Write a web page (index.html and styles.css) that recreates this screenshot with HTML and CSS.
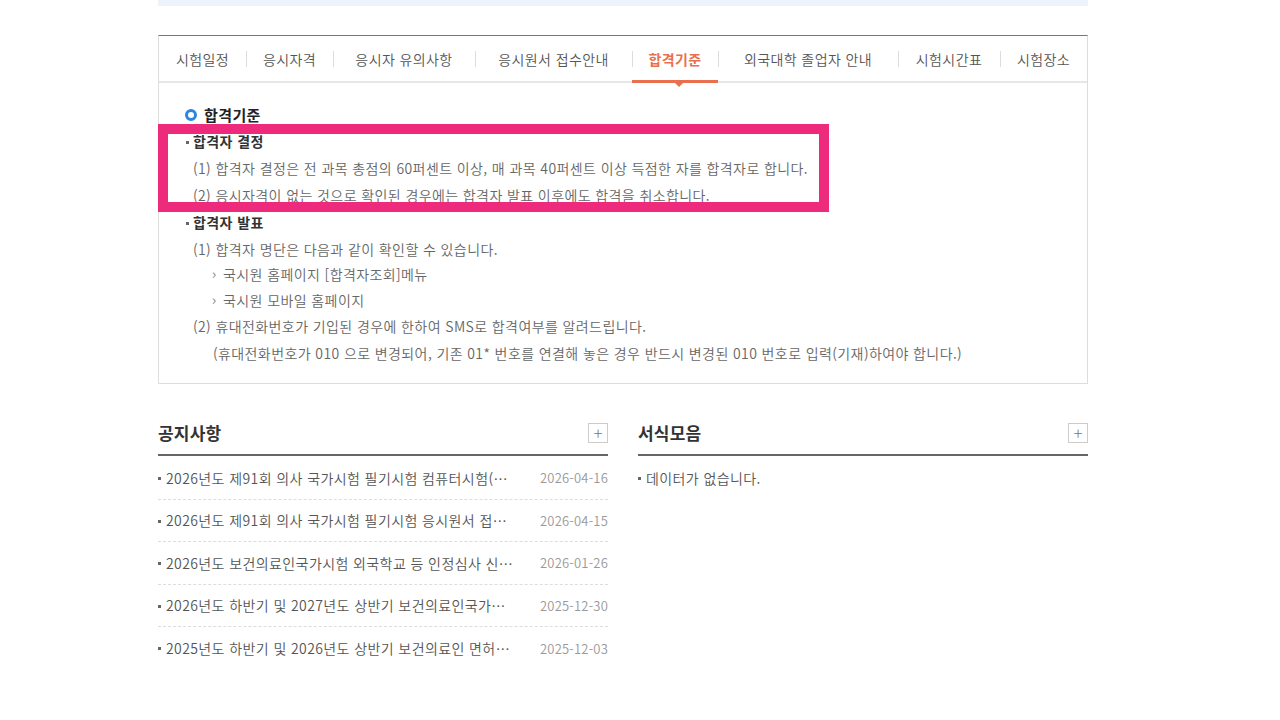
FILE: index.html
```html
<!DOCTYPE html>
<html lang="ko">
<head>
<meta charset="utf-8">
<title>합격기준</title>
<link rel="stylesheet" href="styles.css">
</head>
<body>
<div class="page">
  <div class="top-strip"></div>

  <section class="tab-box">
    <ul class="tabs">
      <li class="tab">시험일정</li>
      <li class="tab">응시자격</li>
      <li class="tab">응시자 유의사항</li>
      <li class="tab">응시원서 접수안내</li>
      <li class="tab active">합격기준</li>
      <li class="tab">외국대학 졸업자 안내</li>
      <li class="tab">시험시간표</li>
      <li class="tab">시험장소</li>
    </ul>
    <div class="tab-content">
      <h3 class="sec-title"><span class="ring"></span>합격기준</h3>
      <p class="sub-title">합격자 결정</p>
      <p class="line">(1) 합격자 결정은 전 과목 총점의 60퍼센트 이상, 매 과목 40퍼센트 이상 득점한 자를 합격자로 합니다.</p>
      <p class="line">(2) 응시자격이 없는 것으로 확인된 경우에는 합격자 발표 이후에도 합격을 취소합니다.</p>
      <p class="sub-title">합격자 발표</p>
      <p class="line">(1) 합격자 명단은 다음과 같이 확인할 수 있습니다.</p>
      <ul class="arrows">
        <li class="arrow">국시원 홈페이지 [합격자조회]메뉴</li>
        <li class="arrow">국시원 모바일 홈페이지</li>
      </ul>
      <p class="line">(2) 휴대전화번호가 기입된 경우에 한하여 SMS로 합격여부를 알려드립니다.</p>
      <p class="note">(휴대전화번호가 010 으로 변경되어, 기존 01* 번호를 연결해 놓은 경우 반드시 변경된 010 번호로 입력(기재)하여야 합니다.)</p>
    </div>
  </section>

  <div class="boards">
    <section class="board">
      <header class="board-head">
        <h2>공지사항</h2>
        <span class="more">+</span>
      </header>
      <ul class="board-list">
        <li><span class="subj">2026년도 제91회 의사 국가시험 필기시험 컴퓨터시험(CBT) 시행 안내</span><span class="date">2026-04-16</span></li>
        <li><span class="subj">2026년도 제91회 의사 국가시험 필기시험 응시원서 접수 안내</span><span class="date">2026-04-15</span></li>
        <li><span class="subj">2026년도 보건의료인국가시험 외국학교 등 인정심사 신청 안내</span><span class="date">2026-01-26</span></li>
        <li><span class="subj">2026년도 하반기 및 2027년도 상반기 보건의료인국가시험 시행계획</span><span class="date">2025-12-30</span></li>
        <li><span class="subj">2025년도 하반기 및 2026년도 상반기 보건의료인 면허시험 안내</span><span class="date">2025-12-03</span></li>
      </ul>
    </section>
    <section class="board">
      <header class="board-head">
        <h2>서식모음</h2>
        <span class="more">+</span>
      </header>
      <ul class="board-list">
        <li class="empty"><span class="subj">데이터가 없습니다.</span></li>
      </ul>
    </section>
  </div>

  <div class="highlight"></div>
</div>
</body>
</html>
```

FILE: styles.css
```css
* { box-sizing: border-box; }
html, body { margin: 0; padding: 0; background: #fff; }
body {
  font-family: "Noto Sans CJK KR", "Noto Sans", sans-serif;
  color: #555;
  font-size: 14px;
  font-weight: 350;
  letter-spacing: 0.4px;
}
ul, p, h2, h3 { margin: 0; padding: 0; list-style: none; }

.page {
  position: relative;
  width: 930px;
  margin-left: 158px;
}

.top-strip {
  height: 6px;
  background: #edf3fa;
}

.tab-box {
  margin-top: 29px;
  border-top: 1px solid #777;
  border-left: 1px solid #ddd;
  border-right: 1px solid #ddd;
  border-bottom: 1px solid #ddd;
}

.tabs {
  display: flex;
  height: 47px;
  border-bottom: 2px solid #e6e6e6;
}
.tab {
  position: relative;
  display: flex;
  align-items: center;
  justify-content: center;
  font-size: 14px;
  color: #555;
}
.tab + .tab::before {
  content: "";
  position: absolute;
  left: 0;
  top: 15px;
  height: 16px;
  width: 1px;
  background: #ddd;
}
.tab:nth-child(1) { width: 87px; }
.tab:nth-child(2) { width: 87px; }
.tab:nth-child(3) { width: 142px; }
.tab:nth-child(4) { width: 157px; }
.tab:nth-child(5) { width: 86px; }
.tab:nth-child(6) { width: 180px; }
.tab:nth-child(7) { width: 102px; }
.tab:nth-child(8) { flex: 1; }

.tab.active {
  color: #e8704f;
  font-weight: bold;
}
.tab.active::after {
  content: "";
  position: absolute;
  left: 0;
  right: 0;
  bottom: -2px;
  height: 3px;
  background: #e8704f;
}

.tab-content {
  position: relative;
  padding: 18px 0 16px 26px;
  line-height: 27px;
}
.tab-content::before {
  content: "";
  position: absolute;
  left: 516px;
  top: 0;
  width: 0;
  height: 0;
  border-left: 4px solid transparent;
  border-right: 4px solid transparent;
  border-top: 4px solid #e8704f;
}

.sec-title {
  display: flex;
  align-items: center;
  font-size: 15px;
  font-weight: bold;
  color: #222;
}
.ring {
  width: 12px;
  height: 12px;
  border: 3px solid #2a86e0;
  border-radius: 50%;
  margin-right: 7px;
}

.sub-title {
  position: relative;
  padding-left: 8px;
  font-size: 14px;
  font-weight: bold;
  color: #333;
}
.sub-title::before {
  content: "";
  position: absolute;
  left: 1px;
  top: 13px;
  width: 3px;
  height: 3px;
  background: #666;
}

.line {
  padding-left: 8px;
  color: #666;
}
.arrows {
  margin-top: -2px;
}
.arrow {
  position: relative;
  padding-left: 38px;
  color: #666;
  line-height: 26px;
}
.arrow::before {
  content: "›";
  position: absolute;
  left: 27px;
  top: -1px;
  color: #777;
}
.note {
  padding-left: 28px;
  color: #666;
}

.boards {
  display: grid;
  grid-template-columns: 450px 450px;
  column-gap: 30px;
  margin-top: 30px;
}

.board-head {
  display: flex;
  align-items: center;
  justify-content: space-between;
  height: 42px;
  border-bottom: 2px solid #666;
  padding-bottom: 3px;
}
.board-head h2 {
  font-size: 17px;
  font-weight: bold;
  color: #333;
  letter-spacing: 0.2px;
}
.more {
  display: flex;
  align-items: center;
  justify-content: center;
  width: 20px;
  height: 20px;
  border: 1px solid #ccc;
  color: #777;
  font-size: 17px;
  font-weight: 300;
  line-height: 1;
  letter-spacing: 0;
}

.board-list {
  margin-top: 1px;
}
.board-list li {
  position: relative;
  display: flex;
  align-items: center;
  height: 42.5px;
  border-bottom: 1px dashed #ddd;
  padding-left: 8px;
}
.board-list li::before {
  content: "";
  position: absolute;
  left: 0;
  top: 20px;
  width: 3px;
  height: 3px;
  background: #666;
}
.board-list li.empty { border-bottom: none; }
.board-list li:last-child { border-bottom: none; }
.subj {
  flex: 1;
  min-width: 0;
  white-space: nowrap;
  overflow: hidden;
  text-overflow: ellipsis;
  color: #555;
  font-size: 14px;
  margin-right: 26px;
}
.date {
  color: #999;
  font-size: 13px;
  letter-spacing: 0.2px;
}

.highlight {
  position: absolute;
  left: 0;
  top: 124px;
  width: 671px;
  height: 88px;
  border: 10px solid #ed2a7c;
}
```
